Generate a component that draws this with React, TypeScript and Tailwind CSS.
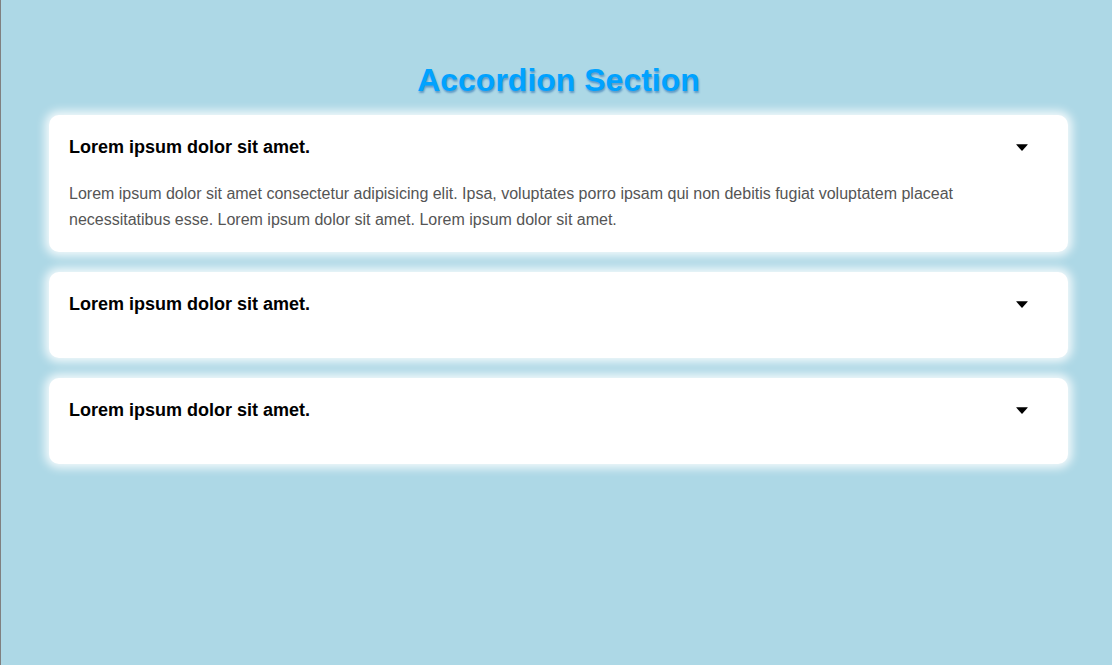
import React from "react";

const items = [
  {
    title: "Lorem ipsum dolor sit amet.",
    body: "Lorem ipsum dolor sit amet consectetur adipisicing elit. Ipsa, voluptates porro ipsam qui non debitis fugiat voluptatem placeat necessitatibus esse. Lorem ipsum dolor sit amet. Lorem ipsum dolor sit amet.",
    open: true,
  },
  { title: "Lorem ipsum dolor sit amet.", body: "", open: false },
  { title: "Lorem ipsum dolor sit amet.", body: "", open: false },
];

function Caret() {
  return (
    <svg width="12" height="7" viewBox="0 0 12 7" className="block">
      <path d="M0.6 0.3 H11.4 Q12 0.3 11.6 0.8 L6.5 6.4 Q6 6.9 5.5 6.4 L0.4 0.8 Q0 0.3 0.6 0.3 Z" fill="#000" />
    </svg>
  );
}

export default function App() {
  return (
    <div
      className="min-h-[665px] w-full bg-[#add8e6] border-l border-[#808080] pt-[61px] pl-[48px] pr-[44px]"
      style={{ fontFamily: '"Liberation Sans", Arial, sans-serif' }}
    >
      <h1 className="text-center text-[32px] leading-[38px] font-bold text-[#00a2ff] mb-[16px] [text-shadow:1px_2px_2px_rgba(0,80,160,0.45)]">
        Accordion Section
      </h1>
      <div className="flex flex-col gap-5">
        {items.map((it, i) => (
          <div
            key={i}
            className={
              "bg-white rounded-[10px] px-5 pt-5 shadow-[0_0_10px_4px_rgba(255,255,255,0.85)] " +
              (it.open ? "pb-[19px]" : "pb-5")
            }
          >
            <div className="flex items-center justify-between h-[22px] pr-5 mt-[1px]">
              <span className="text-[18px] font-bold text-black leading-[22px]">{it.title}</span>
              <Caret />
            </div>
            <div className="mt-[23px]">
              {it.open && (
                <p className="text-[16px] leading-[26px] text-[#555]">{it.body}</p>
              )}
            </div>
          </div>
        ))}
      </div>
    </div>
  );
}
